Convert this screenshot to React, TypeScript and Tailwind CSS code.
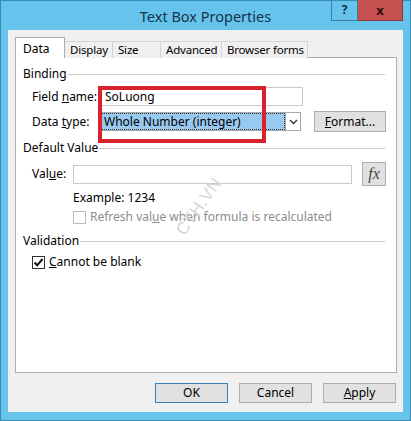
function SectionHeader({ title }: { title: string }) {
  return (
    <div className="flex items-center h-[14px] pr-[2px]">
      <span className="text-black">{title}</span>
      <div className="flex-1 h-px bg-[#c9c9c9] ml-[1px]" />
    </div>
  );
}

function Button({ children, primary }: { children: React.ReactNode; primary?: boolean }) {
  return (
    <button
      className={
        "w-[73px] h-[20px] bg-[#e1e1e1] border flex items-center justify-center text-black " +
        (primary ? "border-[#3c7fb1]" : "border-[#adadad]")
      }
    >
      {children}
    </button>
  );
}

export default function App() {
  const tabs = ["Display", "Size", "Advanced", "Browser forms"];
  const tabWidths = ["w-[48px]", "w-[48px]", "w-[61px]", "w-[86px]"];

  return (
    <div
      className="w-[411px] h-[421px] bg-[#65c3ec] border border-[#3a8cb5] flex flex-col text-[12px] leading-none"
      style={{ fontFamily: '"Noto Sans", "Segoe UI", sans-serif' }}
    >
      {/* title bar */}
      <div className="relative h-[29px] flex items-center justify-center shrink-0">
        <span className="text-[14.5px] text-[#16344a] mt-[1px]">Text Box Properties</span>
        <div className="absolute right-[7px] top-[-1px] flex">
          <div className="w-[27px] h-[21px] border border-[#3d7ea6] border-t-0 flex items-center justify-center text-[#10304a] font-bold text-[12px]">
            ?
          </div>
          <div className="w-[45px] h-[21px] bg-[#c75050] border border-[#8c3636] border-t-0 border-l-0 flex items-center justify-center text-[#2a0c0c] font-bold text-[13px]">
            x
          </div>
        </div>
      </div>

      {/* client area */}
      <div className="flex-1 mx-[7px] mb-[8px] bg-[#f0f0f0] flex flex-col pl-[7px] pr-[6px] pt-[8px]">
        {/* tabs */}
        <div className="flex items-end h-[20px] relative z-10">
          <div className="w-[50px] h-[21px] bg-white border border-[#adadad] border-b-0 pl-[7px] pt-[5px] text-black whitespace-nowrap">
            Data
          </div>
          {tabs.map((t, i) => (
            <div
              key={t}
              className={
                tabWidths[i] +
                " h-[17px] bg-[#f0f0f0] border border-[#d4d4d4] border-b-0 border-l-0 pl-[5px] flex items-center whitespace-nowrap text-[11.5px] tracking-[-0.2px] text-black"
              }
            >
              {t}
            </div>
          ))}
        </div>

        {/* panel */}
        <div className="relative h-[316px] bg-white border border-[#adadad] -mt-px px-[7px] pr-[9px] pt-[9px]">
          <SectionHeader title="Binding" />

          <div className="flex items-center h-[19px] mt-[6px]">
            <div className="w-[77px] pl-[9px]">
              Field <span className="underline">n</span>ame:
            </div>
            <div className="w-[203px] h-[19px] border border-[#c9c9c9] flex items-center pl-[4px] text-black">
              SoLuong
            </div>
          </div>

          <div className="flex items-center h-[21px] mt-[5px]">
            <div className="w-[77px] pl-[9px]">
              Data <span className="underline">t</span>ype:
            </div>
            <div className="w-[201px] h-[19px] border border-[#a9a9a9] flex items-center">
              <div className="w-[184px] h-full bg-[#99c9ef] border border-dotted border-[#333] flex items-center pl-[2px] text-black">
                Whole Number (integer)
              </div>
              <div className="flex-1 h-full border-l border-[#a9a9a9] flex items-center justify-center">
                <svg width="9" height="6" viewBox="0 0 9 6">
                  <path d="M1 1 L4.5 4.5 L8 1" fill="none" stroke="#333" strokeWidth="1.3" />
                </svg>
              </div>
            </div>
            <div className="w-[72px] h-[21px] ml-[13px] bg-[#e1e1e1] border border-[#adadad] flex items-center justify-center text-black">
              <span className="underline">F</span>ormat...
            </div>
          </div>

          <div className="mt-[9px]">
            <SectionHeader title="Default Value" />
          </div>

          <div className="flex items-center h-[24px] mt-[7px]">
            <div className="w-[50px] pl-[9px]">
              Val<span className="underline">u</span>e:
            </div>
            <div className="w-[279px] h-[19px] border border-[#c9c9c9]" />
            <div className="w-[24px] h-[24px] ml-[10px] bg-[#e1e1e1] border border-[#adadad] flex items-center justify-center">
              <span className="italic text-[16px] text-[#444]" style={{ fontFamily: '"Liberation Serif", serif' }}>
                fx
              </span>
            </div>
          </div>

          <div className="h-[14px] mt-[5px] pl-[50px] flex items-center text-black">Example: 1234</div>

          <div className="h-[14px] mt-[5px] pl-[50px] flex items-center text-[#8c8c8c]">
            <div className="w-[13px] h-[13px] border border-[#bcbcbc] mr-[4px]" />
            Refresh val<span className="underline">u</span>e when formula is recalculated
          </div>

          <div className="mt-[10px]">
            <SectionHeader title="Validation" />
          </div>

          <div className="h-[14px] mt-[7px] pl-[9px] flex items-center text-black">
            <div className="w-[13px] h-[13px] border border-[#333] mr-[4px] flex items-center justify-center">
              <svg width="11" height="11" viewBox="0 0 11 11">
                <path d="M1.5 5.5 L4.2 8.3 L9.5 2" fill="none" stroke="#111" strokeWidth="2" />
              </svg>
            </div>
            <span className="underline">C</span>annot be blank
          </div>

          {/* red highlight */}
          <div className="absolute left-[82px] top-[28px] w-[168px] h-[57px] border-[4px] border-[#d8232c]" />

          {/* watermark */}
          <div
            className="absolute left-[150px] top-[140px] text-[17px] text-[#d6d6d6] -rotate-[55deg] tracking-wide"
            style={{ fontFamily: '"Liberation Sans", sans-serif' }}
          >
            CTH.VN
          </div>
        </div>

        {/* buttons */}
        <div className="flex justify-end gap-[11px] mt-[10px] pr-[1px]">
          <Button primary>OK</Button>
          <Button>Cancel</Button>
          <Button>
            <span className="underline">A</span>pply
          </Button>
        </div>
      </div>
    </div>
  );
}
